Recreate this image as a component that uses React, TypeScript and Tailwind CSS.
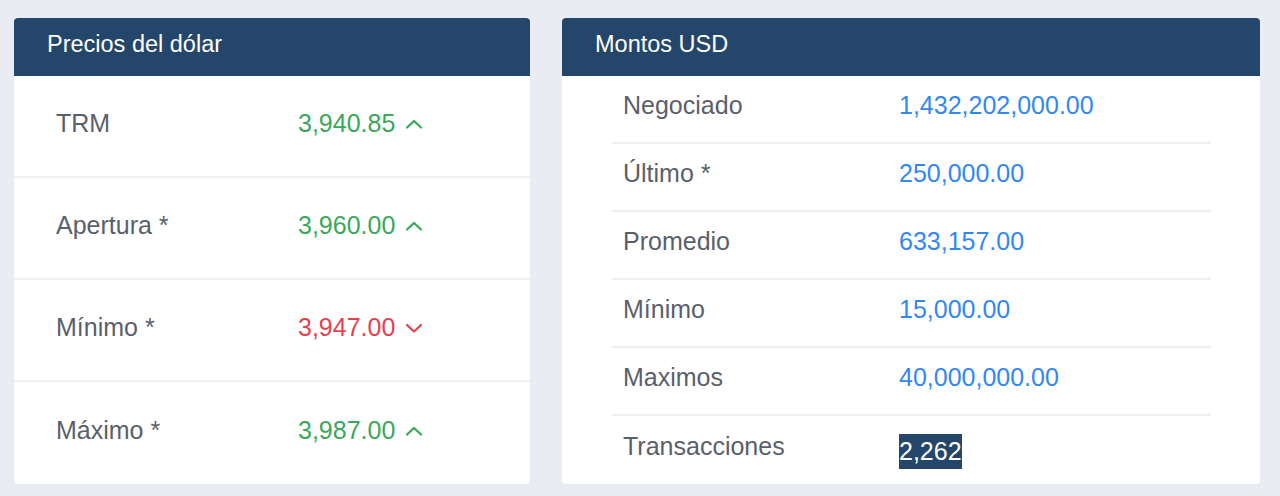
import * as React from 'react'

type Trend = 'up' | 'down'

interface PriceRow {
  label: string
  value: string
  trend: Trend
}

interface AmountRow {
  label: string
  value: string
  highlight?: boolean
}

const prices: PriceRow[] = [
  {label: 'TRM', value: '3,940.85', trend: 'up'},
  {label: 'Apertura *', value: '3,960.00', trend: 'up'},
  {label: 'Mínimo *', value: '3,947.00', trend: 'down'},
  {label: 'Máximo *', value: '3,987.00', trend: 'up'},
]

const amounts: AmountRow[] = [
  {label: 'Negociado', value: '1,432,202,000.00'},
  {label: 'Último *', value: '250,000.00'},
  {label: 'Promedio', value: '633,157.00'},
  {label: 'Mínimo', value: '15,000.00'},
  {label: 'Maximos', value: '40,000,000.00'},
  {label: 'Transacciones', value: '2,262', highlight: true},
]

function TrendIcon({trend}: {trend: Trend}) {
  return (
    <svg
      width="18"
      height="12"
      viewBox="0 0 18 12"
      fill="none"
      stroke="currentColor"
      strokeWidth="2.3"
      strokeLinecap="round"
      strokeLinejoin="round"
      className="ml-[10px] mt-[2px]"
    >
      {trend === 'up' ? (
        <polyline points="2,9.5 9,3 16,9.5" />
      ) : (
        <polyline points="2,3 9,9.5 16,3" />
      )}
    </svg>
  )
}

function CardHeader({title}: {title: string}) {
  return (
    <div className="flex h-[58px] items-center rounded-t-[4px] bg-[#24466a] pl-[33px] pb-[4px] text-[23.5px] text-white">
      {title}
    </div>
  )
}

function PricesCard() {
  return (
    <div className="flex w-[516px] shrink-0 flex-col rounded-[4px] bg-white">
      <CardHeader title="Precios del dólar" />
      <div className="flex flex-col">
        {prices.map((row, i) => (
          <div
            key={row.label}
            className={`flex h-[102px] items-center pb-[6px] pl-[42px] ${
              i < prices.length - 1 ? 'border-b-2 border-[#eef0f3]' : ''
            }`}
          >
            <span className="w-[242px] text-[#5a5f6b]">{row.label}</span>
            <span
              className={`flex items-center ${
                row.trend === 'up' ? 'text-[#3aa85a]' : 'text-[#e3424f]'
              }`}
            >
              {row.value}
              <TrendIcon trend={row.trend} />
            </span>
          </div>
        ))}
      </div>
    </div>
  )
}

function AmountsCard() {
  return (
    <div className="flex flex-1 flex-col rounded-[4px] bg-white">
      <CardHeader title="Montos USD" />
      <div className="flex flex-col pl-[50px] pr-[49px]">
        {amounts.map((row, i) => (
          <div
            key={row.label}
            className={`flex h-[68px] items-center pb-[8px] pl-[11px] ${
              i < amounts.length - 1 ? 'border-b-2 border-[#eceef1]' : ''
            }`}
          >
            <span className="w-[276px] text-[#5a5f6b]">{row.label}</span>
            {row.highlight ? (
              <span className="mt-[10px] inline-block h-[35px] bg-[#24466a] leading-[35px] text-white">
                {row.value}
              </span>
            ) : (
              <span className="text-[#3288f2]">{row.value}</span>
            )}
          </div>
        ))}
      </div>
    </div>
  )
}

export default function App() {
  return (
    <div className="flex h-[496px] w-[1280px] gap-8 bg-[#e9edf3] pl-[14px] pr-[20px] pt-[18px] pb-[12px] font-['Liberation_Sans',Arial,sans-serif] text-[25px] leading-none">
      <PricesCard />
      <AmountsCard />
    </div>
  )
}
